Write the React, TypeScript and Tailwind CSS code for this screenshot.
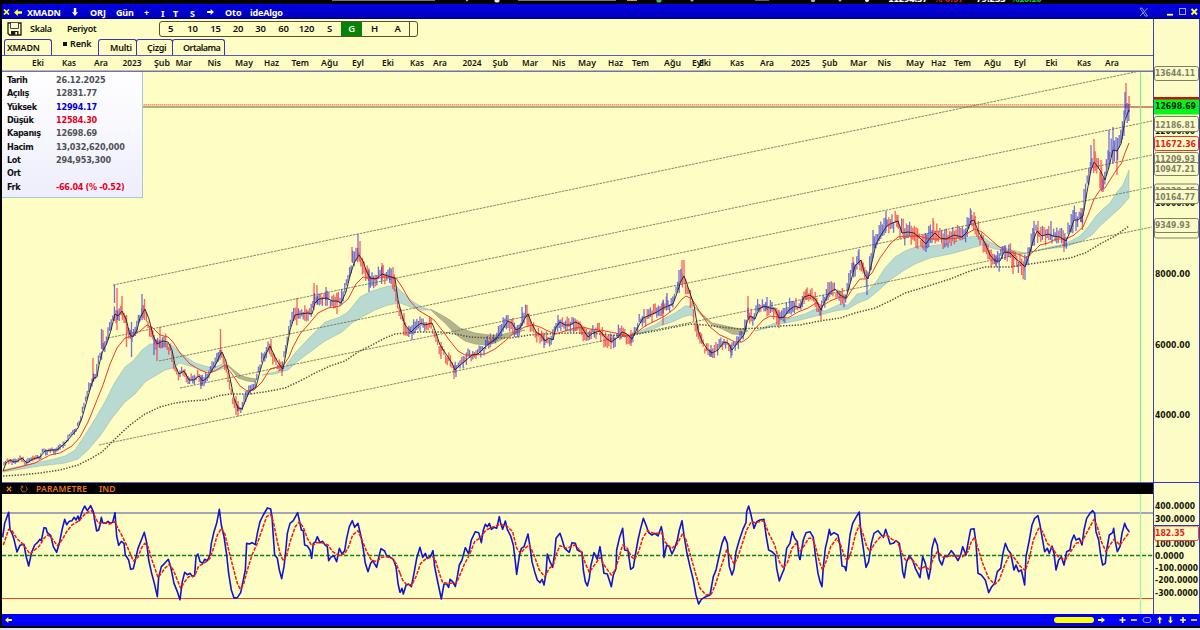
import React from "react";

const CLOSE =
  "3,471 6,463 10,460 14,462 18,461 22,458 27,463 33,459 40,457 45,451 52,450 57,450 63,445 68,440 73,434 78,428 82,418 86,404 91,386 94,378 97,377 99,365 102,353 107,343 111,330 115,314 118,316 122,311 126,319 130,335 133,337 137,330 140,318 145,309 149,319 153,335 157,344 163,341 168,342 172,350 175,365 179,374 184,371 189,380 194,380 199,376 203,381 208,377 212,370 216,364 219,357 222,352 226,361 230,378 234,398 238,408 242,409 245,402 249,392 253,389 256,387 260,371 264,358 270,346 275,357 279,364 283,369 286,353 290,330 295,315 300,314 308,313 312,314 315,303 319,299 327,298 332,301 337,301 341,303 346,292 350,276 354,263 359,255 363,261 366,270 370,278 376,279 382,274 388,276 395,278 398,300 402,315 405,325 411,332 416,327 421,323 425,325 432,323 436,333 440,345 444,351 448,357 452,363 455,370 459,366 465,361 472,355 478,354 484,348 490,343 497,338 502,330 508,321 512,323 516,330 520,328 525,318 528,314 532,324 537,333 541,335 545,341 549,338 553,340 556,327 560,322 565,325 570,325 575,322 580,324 584,331 588,337 593,333 600,331 605,337 611,342 617,338 622,332 627,334 632,339 638,327 643,318 650,315 657,312 663,308 668,306 673,304 677,293 681,281 684,276 687,284 691,296 694,305 698,330 702,341 707,349 712,353 718,350 724,342 728,343 732,350 738,342 744,335 747,322 750,316 755,319 759,309 764,306 770,308 775,309 779,318 784,317 789,310 795,306 800,308 804,297 810,295 816,300 821,310 824,303 829,293 835,289 840,295 846,298 850,284 855,266 861,260 865,275 868,279 872,262 876,244 881,235 886,227 890,224 895,222 898,221 902,233 908,232 914,233 920,238 926,244 930,238 935,233 940,238 946,239 954,235 962,237 967,232 971,221 974,220 978,231 985,243 990,255 995,261 1000,261 1004,252 1010,253 1016,259 1021,263 1025,267 1029,256 1033,241 1037,231 1042,236 1048,234 1053,236 1060,237 1066,241 1070,232 1074,220 1078,220 1083,216 1087,192 1091,170 1094,162 1098,167 1101,172 1105,180 1109,167 1113,150 1117,151 1121,144 1125,120 1129,110";

const FAST_MA =
  "3,471 20,467 35,463 50,455 60,453 72,446 80,437 88,422 95,405 103,385 110,364 117,348 125,338 132,336 140,331 147,325 153,328 160,335 168,337 173,342 180,353 190,364 200,370 208,373 215,371 225,365 232,374 240,386 247,391 254,390 262,382 270,369 277,367 283,366 289,357 293,347 300,334 308,325 318,313 328,308 340,306 348,299 356,284 363,277 372,279 385,277 396,278 402,287 410,301 418,310 428,316 434,320 442,330 450,341 458,351 465,355 475,355 485,354 495,349 505,341 515,332 525,327 533,325 540,327 548,331 555,334 565,331 575,328 583,327 590,329 600,330 610,332 620,334 628,336 636,333 645,326 655,321 665,316 675,308 682,299 686,296 692,299 700,312 710,327 720,335 727,338 735,342 742,342 748,338 755,329 763,320 770,316 778,317 788,318 798,312 808,308 816,303 822,306 830,301 840,297 846,299 853,288 860,279 866,279 872,273 880,258 890,244 898,237 908,236 918,236 930,239 945,239 960,238 968,233 975,229 982,232 990,239 998,246 1008,252 1018,254 1026,258 1034,251 1040,245 1048,243 1056,239 1066,239 1074,235 1083,227 1088,215 1094,199 1100,190 1105,188 1110,180 1117,169 1121,164 1125,153 1129,143";

const SLOW_MA =
  "3,476 20,475 40,473 60,470 78,465 90,459 102,452 115,439 130,425 145,414 160,407 175,403 190,401 205,400 218,396 230,394 250,394 270,391 285,388 300,381 315,373 330,366 345,361 358,352 372,345 385,338 395,334 405,333 420,332 440,332 455,334 470,337 490,338 510,338 530,335 545,334 570,333 590,333 610,335 625,336 650,332 670,328 690,324 705,325 720,327 740,329 760,328 780,326 800,325 820,321 840,318 855,313 875,308 890,301 905,293 925,287 950,279 970,271 985,267 1010,267 1030,264 1050,261 1070,258 1085,253 1100,244 1115,236 1129,226";

const UP_CLOUDS = [
  "3,470 30,464 50,460 65,456 75,450 85,435 95,419 105,402 115,382 125,367 133,361 142,350 150,344 158,344 166,343 173,346 182,354 195,363 205,366 213,368 222,364 228,365 235,372 228,367 215,371 205,371 190,366 180,363 173,368 165,370 155,376 145,382 135,394 125,402 112,418 100,436 88,450 78,459 65,463 40,466 3,472",
  "262,375 275,372 285,367 295,353 310,337 325,322 340,317 348,312 360,297 372,291 385,287 395,285 402,292 412,301 422,307 430,310 420,310 408,306 400,303 388,305 375,310 362,317 352,323 342,332 325,341 310,352 298,361 288,370 275,374",
  "565,331 575,329 584,328 580,330",
  "630,336 640,331 655,325 665,318 675,313 685,306 692,306 694,317 690,315 683,317 672,322 660,326 648,331",
  "755,331 775,323 790,318 805,314 815,309 825,311 840,304 848,305 857,294 867,292 876,282 885,268 895,257 905,251 918,246 930,246 945,244 960,240 973,236 983,237 990,242 1000,247 1012,250 1025,253 1010,252 995,249 983,245 975,247 965,250 950,254 930,258 915,264 903,271 890,280 878,291 868,299 858,303 848,309 835,311 820,315 800,320 780,324 760,330",
  "1030,252 1050,247 1065,244 1080,236 1088,227 1096,216 1103,209 1110,203 1117,192 1123,185 1129,170 1129,198 1120,208 1110,217 1100,226 1092,235 1082,241 1065,247 1045,249",
];

const DOWN_CLOUDS = [
  "228,365 235,371 242,376 250,378 257,379 254,382 247,381 238,378",
  "430,309 440,314 450,320 460,328 475,333 490,335 500,335 512,332 525,330 512,335 505,338 495,343 485,345 475,344 465,341 455,334 445,323 436,315",
  "693,305 700,312 712,323 722,325 735,328 745,329 748,331 740,335 732,334 722,329 712,325 702,316",
];

const TRENDS = [
  [113, 285, 1140, 71],
  [108, 338, 1152, 121],
  [159, 361, 1152, 155],
  [180, 388, 1152, 187],
  [99, 445, 1152, 227],
];

/* Isolated extremes of the session range: x, high, low, colour */
const WICKS: [number, number, number, string][] = [
  [114.5, 285, 303, "b"], [117, 288, 330, "r"], [122, 296, 315, "r"], [126.5, 315, 347, "r"], [131.5, 322, 357, "b"],
  [142, 294, 320, "b"], [144.5, 299, 320, "r"], [157, 340, 361, "r"], [154, 335, 355, "b"], [93, 358, 382, "r"],
  [103, 330, 350, "r"], [101.5, 329, 349, "b"], [160, 327, 348, "r"], [201, 375, 389, "b"], [220.5, 329, 355, "r"],
  [236, 396, 415, "r"], [238, 401, 416, "r"], [297, 298, 318, "r"], [271, 339, 350, "r"], [282, 365, 376, "r"],
  [314, 283, 310, "r"], [317, 285, 305, "r"], [326, 287, 300, "b"], [337, 295, 314, "r"], [352, 247, 262, "r"],
  [358, 234, 256, "b"], [360, 241, 262, "r"], [369, 270, 292, "b"], [382, 263, 280, "r"], [393, 267, 285, "r"],
  [404, 313, 332, "r"], [412, 325, 340, "b"], [441, 342, 359, "r"], [454, 365, 379, "r"], [456, 366, 377, "b"],
  [522, 307, 326, "b"], [527, 305, 320, "r"], [544, 335, 348, "b"], [558, 315, 325, "b"], [611, 338, 349, "r"],
  [631, 330, 346, "r"], [663, 301, 325, "r"], [667, 293, 305, "b"], [679, 270, 286, "b"], [682, 260, 285, "r"],
  [684, 260, 280, "r"], [711, 345, 357, "b"], [731, 345, 358, "b"], [748, 296, 318, "r"], [767, 297, 310, "b"],
  [779, 310, 328, "r"], [806, 289, 300, "r"], [821, 308, 320, "r"], [828, 282, 300, "b"], [853, 257, 272, "r"],
  [859, 249, 265, "b"], [867, 273, 295, "b"], [873, 230, 255, "b"], [886, 211, 231, "b"], [898, 215, 228, "r"],
  [926, 235, 252, "b"], [933, 218, 237, "r"], [971, 210, 225, "b"], [974, 212, 225, "r"], [996, 255, 267, "r"],
  [1005, 245, 260, "b"], [1013, 255, 274, "r"], [1025, 262, 280, "b"], [1034, 221, 238, "b"], [1038, 221, 235, "r"],
  [1051, 221, 236, "b"], [1064, 238, 252, "r"], [1073, 210, 228, "b"], [1081, 208, 222, "r"], [1082.5, 215, 230, "r"],
  [1091, 145, 165, "b"], [1094, 139, 162, "r"], [1101, 160, 190, "r"], [1103, 179, 192, "b"], [1109, 130, 160, "b"],
  [1113, 127, 150, "b"], [1117, 150, 175, "r"], [1125, 92, 118, "b"], [1126, 83, 108, "r"], [1129, 96, 112, "r"],
];

const BARS = (() => {
  const pts = CLOSE.split(" ").map((p) => p.split(",").map(Number));
  const at = (x: number) => {
    if (x >= 1129) return 106;
    for (let i = 1; i < pts.length; i++) {
      if (x <= pts[i][0]) {
        const [x0, y0] = pts[i - 1];
        const [x1, y1] = pts[i];
        return y0 + ((y1 - y0) * (x - x0)) / (x1 - x0);
      }
    }
    return 106;
  };
  let seed = 71;
  const rnd = () => {
    seed = (seed * 16807) % 2147483647;
    return seed / 2147483647;
  };
  let up = "";
  let down = "";
  for (let x = 4; x < 1129; x += 1.6) {
    const amp = 2.8 + (482 - at(x)) * 0.034;
    const mid = at(x + 1.5) + (rnd() - 0.5) * amp * 0.7;
    const hi = mid - amp * (0.2 + rnd() * 0.8);
    const lo = mid + amp * (0.2 + rnd() * 0.8);
    const rising = at(x + 3) - at(x) + (rnd() - 0.5) * 7 < 0;
    const seg = `M${x.toFixed(1)} ${hi.toFixed(1)}V${lo.toFixed(1)}`;
    if (rising) up += seg;
    else down += seg;
  }
  for (const [x, hi, lo, c] of WICKS) {
    const seg = `M${x} ${hi}V${lo}`;
    if (c === "b") up += seg;
    else down += seg;
  }
  return { up, down };
})();

/* Oscillator traces, three consecutive blocks of 1200 units (3 units = 1px) */
const OSC = [
  "8,172 14,130 26,97 30,148 36,160 42,178 51,216 60,196 72,193 78,228 86,258 95,217 104,195 112,188 120,178 124,182 132,143 138,144 142,158 152,166 160,200 170,217 178,190 186,150 194,118 200,134 208,124 216,122 222,112 228,120 234,108 238,122 246,95 254,78 262,92 272,77 280,95 284,120 290,153 296,150 300,135 304,112 308,128 316,130 324,124 330,130 338,127 345,98 350,168 356,196 364,184 372,190 376,225 386,240 392,268 400,266 406,240 414,205 424,180 433,157 440,188 446,240 455,280 463,310 472,350 476,292 484,260 494,250 505,238 512,260 522,310 532,335 540,359 547,305 554,277 562,284 570,280 578,290 584,285 588,230 594,222 600,245 608,250 614,238 622,242 630,225 634,190 642,155 650,130 658,88 664,135 672,170 680,225 686,280 694,330 702,354 712,353 722,338 730,300 736,270 740,190 748,192 756,188 766,194 772,160 780,125 790,105 802,84 812,87 816,110 820,170 824,225 832,235 838,270 845,296 852,260 856,225 862,160 870,130 880,122 893,98 900,130 904,150 910,152 914,195 922,198 930,210 935,235 940,190 946,186 952,170 960,188 968,184 976,196 982,200 986,242 994,230 1002,228 1010,245 1018,205 1026,222 1034,212 1040,175 1048,140 1057,122 1064,142 1074,130 1082,165 1088,195 1096,250 1104,275 1112,250 1118,242 1130,262 1138,225 1143,206 1154,213 1160,228 1168,230 1180,238 1188,260 1194,310 1200,338",
  "0,338 6,325 10,342 18,316 26,312 34,320 42,280 50,235 60,202 68,232 76,220 82,235 92,228 99,212 104,260 112,300 124,357 132,312 140,312 146,322 150,298 158,305 166,320 172,290 178,255 186,240 196,203 206,222 214,180 226,155 236,158 244,188 250,150 256,133 262,140 268,130 274,148 282,142 290,145 298,110 302,130 308,148 316,123 322,148 332,168 340,195 346,245 350,283 358,228 364,205 372,200 384,162 390,200 396,245 404,275 412,300 420,308 426,298 432,315 438,280 442,222 450,245 458,262 464,220 468,175 480,160 486,178 494,205 508,217 516,188 526,190 532,210 546,217 550,270 556,305 562,318 568,295 572,260 582,218 592,238 600,200 606,240 612,280 622,282 634,320 640,285 648,265 650,210 658,175 668,145 674,210 684,212 688,240 692,268 700,262 706,225 714,180 722,145 730,115 738,135 746,158 756,165 764,160 774,168 784,140 788,160 792,232 800,195 808,200 816,222 824,205 832,180 838,150 846,122 852,165 860,215 870,260 880,300 888,345 896,372 904,358 914,352 930,345 940,290 948,270 958,225 966,190 974,170 982,190 988,260 996,285 1002,268 1008,215 1018,180 1030,145 1038,128 1040,95 1046,78 1052,100 1062,145 1070,125 1080,120 1092,118 1098,165 1106,210 1116,215 1126,225 1130,265 1138,303 1146,282 1152,268 1160,205 1170,190 1177,155 1184,175 1192,185 1196,225 1200,240",
  "0,240 4,215 10,180 18,158 30,155 40,172 46,225 54,280 60,305 66,320 70,260 76,205 82,180 88,148 92,165 102,158 114,165 120,195 126,258 134,260 138,272 144,220 150,165 158,130 168,112 178,96 182,150 190,205 198,262 206,245 214,190 222,160 234,152 244,165 250,172 257,148 264,170 270,192 280,190 288,182 298,190 304,235 308,275 313,293 320,245 328,228 338,240 346,265 360,293 368,230 376,250 386,297 392,265 396,205 404,175 412,195 418,240 426,255 434,228 442,230 454,212 464,225 474,242 482,225 488,200 498,225 504,190 512,148 522,146 528,190 534,280 544,285 556,300 566,338 574,322 584,310 592,275 602,265 610,215 616,190 624,210 632,220 636,240 642,270 648,255 656,275 664,270 674,315 678,230 688,180 696,135 704,115 714,107 720,135 726,170 734,215 742,205 748,220 756,198 762,220 768,270 776,240 784,230 792,255 800,215 810,210 814,185 822,165 828,180 838,175 846,195 852,150 860,115 870,100 878,92 884,100 888,155 896,180 902,225 908,255 916,250 920,210 928,165 938,158 941,145 946,185 952,215 960,200 966,160 974,130 980,145 988,155",
];

const SIGNAL = [
  "10,195 26,148 36,152 50,175 66,190 78,205 90,222 104,210 118,198 132,175 142,165 152,170 172,197 186,180 200,155 216,135 238,122 256,100 274,92 284,108 294,128 312,128 330,132 344,125 354,145 370,175 384,205 400,243 414,232 424,205 434,190 444,200 456,240 474,292 484,280 494,265 508,253 520,270 532,300 542,325 552,308 566,290 584,288 596,258 612,250 630,235 642,200 652,165 664,145 674,160 686,210 700,265 712,310 720,327 730,315 742,270 756,225 772,190 786,150 800,110 812,103 820,125 830,175 840,220 850,243 860,225 872,180 886,140 898,125 910,142 922,175 936,198 950,188 966,188 984,195 998,215 1016,226 1034,222 1046,200 1058,165 1074,152 1086,180 1100,215 1114,240 1130,245 1144,232 1160,230 1176,235 1188,250 1200,280",
  "0,280 8,300 20,314 36,314 48,290 62,250 76,238 98,230 106,240 118,280 128,308 142,310 168,310 178,290 192,255 208,225 224,185 242,172 258,150 276,142 300,133 320,138 338,155 350,205 362,220 374,205 388,195 402,225 418,270 434,290 448,265 460,255 468,225 480,197 500,205 524,195 544,215 556,250 568,277 580,260 600,232 614,258 634,285 646,270 656,235 668,195 682,205 694,230 704,238 716,215 728,175 742,152 760,160 786,160 794,185 814,205 830,195 848,160 858,180 874,235 888,285 900,325 918,345 934,342 946,315 960,270 980,210 992,230 1002,252 1012,235 1024,200 1040,150 1054,125 1066,128 1092,122 1104,155 1124,195 1138,245 1150,264 1162,248 1176,205 1188,190 1200,212",
  "0,215 14,195 26,175 38,175 48,205 58,245 68,270 80,240 92,200 110,175 122,195 132,225 142,243 154,215 166,165 178,135 190,165 200,200 210,215 224,190 240,172 260,165 276,178 292,185 304,215 316,240 332,235 346,250 360,268 374,260 388,268 400,235 412,215 430,232 450,228 470,228 488,230 504,215 514,185 524,172 534,205 548,250 566,295 584,313 598,300 614,255 630,222 644,235 660,258 676,272 688,235 700,180 716,145 728,155 742,190 758,205 774,230 796,240 812,215 828,190 846,185 862,155 882,118 892,140 904,185 918,215 930,195 942,178 960,195 974,175 988,157",
];

const MONTHS: [string, number, number][] = [
  ["Eki", 32, 12], ["Kas", 62, 14], ["Ara", 94, 14], ["2023", 122.5, 19], ["Şub", 154, 16], ["Mar", 175.5, 16.5], ["Nis", 207.500, 13.500],
  ["May", 235, 18], ["Haz", 264, 15], ["Tem", 291.500, 17.500], ["Ağu", 321, 17], ["Eyl", 352, 12], ["Eki", 382, 12], ["Kas", 410, 14],
  ["Ara", 433, 14], ["2024", 462.500, 19], ["Şub", 492.500, 15.500], ["Mar", 522, 16], ["Nis", 552, 13.500], ["May", 578, 18], ["Haz", 608, 15],
  ["Tem", 632, 17], ["Ağu", 664, 17], ["Eyl", 692, 12], ["Eki", 699, 12], ["Kas", 730, 14], ["Ara", 760, 14], ["2025", 791, 19],
  ["Şub", 822, 15.500], ["Mar", 850, 17], ["Nis", 877.500, 13.500], ["May", 906, 18], ["Haz", 931, 15], ["Tem", 954, 17], ["Ağu", 984, 17],
  ["Eyl", 1014, 12], ["Eki", 1045.500, 12], ["Kas", 1077, 14], ["Ara", 1105, 14],
];

const QUOTE: [string, string, string][] = [
  ["Tarih", "26.12.2025", "text-[#505058]"],
  ["Açılış", "12831.77", "text-[#505058]"],
  ["Yüksek", "12994.17", "text-[#0000d8]"],
  ["Düşük", "12584.30", "text-[#e4001c]"],
  ["Kapanış", "12698.69", "text-[#505058]"],
  ["Hacim", "13,032,620,000", "text-[#505058]"],
  ["Lot", "294,953,300", "text-[#505058]"],
  ["Ort", "", ""],
  ["Frk", "-66.04 (% -0.52)", "text-[#e4001c] tracking-[-0.320px]"],
];

const NOTO = "font-['Noto_Sans','Open_Sans',sans-serif]";
const TAHOMA = "font-['DejaVu_Sans_Condensed','DejaVu_Sans',sans-serif]";

function LeftArrow() {
  return (
    <svg className="h-[7px] w-[8px] shrink-0" viewBox="0 0 8 7">
      <path d="M0 3.5 3.8 0v2.3H8v2.4H3.8V7z" fill="#ffff40" />
    </svg>
  );
}

function TickerStrip() {
  return (
    <svg className="block h-[4px] w-full shrink-0 bg-black" viewBox="0 0 1200 4">
      <rect x="332" y="0" width="103" height="1" fill="#787878" />
      <rect x="518" y="0" width="98" height="1" fill="#787878" />
      <g fill="#b8b8b8">
        <circle cx="467" cy="0" r="1.200" />
        <circle cx="497" cy="0" r="2.600" fill="#e8e8e8" />
        <rect x="627" y="0" width="10" height="1" fill="#c8a040" />
        <circle cx="659" cy="0" r="2.600" fill="#40c070" />
        <circle cx="692" cy="0" r="1.500" />
        <rect x="755" y="0" width="14" height="1" fill="#606060" />
        <circle cx="813" cy="0" r="2.200" />
        <circle cx="840" cy="0" r="1.500" />
      </g>
      <g fontFamily="DejaVu Sans, sans-serif" fontWeight="700" fontSize="8.5">
        <text x="888" y="2.300" textLength="40" fill="#fff">11294.37</text>
        <text x="934" y="2.300" textLength="30" fill="#d02030">% 0.57</text>
        <text x="976" y="2.300" textLength="30" fill="#fff">79.233</text>
        <text x="1011" y="2.300" textLength="31" fill="#20c040">%10.10</text>
      </g>
      <circle cx="867" cy="0" r="2" fill="#fff" />
    </svg>
  );
}

function TitleBar() {
  const cell = "block shrink-0 whitespace-nowrap";
  return (
    <header
      className={`flex h-[15px] w-full shrink-0 items-center border-b border-[#000070] bg-gradient-to-b from-[#0000e8] to-[#0000b8] pt-[2px] text-[9px] font-bold leading-none text-[#fffff0] ${NOTO}`}
    >
      <svg className="ml-[1px] h-[6px] w-[7px] shrink-0" viewBox="0 0 7 6">
        <path d="M1 .5 6 5.500M6 .5 1 5.500" stroke="#ffff40" strokeWidth="1.700" />
      </svg>
      <span className="w-[4px] shrink-0" />
      <LeftArrow />
      <span className={`${cell} ml-[5px] w-[45px] tracking-[-0.200px]`}>XMADN</span>
      <svg className="h-[8px] w-[6px] shrink-0" viewBox="0 0 6 8">
        <path d="M3 8 0 4.200h1.800V0h2.400v4.200H6z" fill="#fff" />
      </svg>
      <span className={`${cell} ml-[12px] w-[26px]`}>ORJ</span>
      <span className={`${cell} w-[28px] tracking-[-0.150px]`}>Gün</span>
      <span className={`${cell} w-[17px] pt-[1px]`}>+</span>
      <span className={`${cell} w-[12px] pt-[2px]`}>I</span>
      <span className={`${cell} w-[17px] pt-[2px]`}>T</span>
      <span className={`${cell} w-[17px] pt-[2px]`}>S</span>
      <svg className="h-[6px] w-[7px] shrink-0" viewBox="0 0 8 7">
        <path d="M8 3.500 4.200 0v2.300H0v2.400h4.200V7z" fill="#fff" />
      </svg>
      <span className={`${cell} ml-[11px] w-[25px]`}>Oto</span>
      <span className={`${cell} tracking-[-0.200px]`}>ideAlgo</span>
      <svg className="ml-auto h-[12px] w-[64px] shrink-0" viewBox="0 0 64 12">
        <path d="M4 2.200h2.200L11.500 10H9.300zM11.500 2.200 4 10" fill="none" stroke="#8c96dc" strokeWidth="1" />
        <rect x="31" y="7.800" width="6" height="1.800" fill="#ffff60" />
        <rect x="43.500" y="2.500" width="6" height="6" fill="none" stroke="#a8a8d8" />
        <path d="m55.500 3 5.500 5.500m0-5.500L55.500 8.500" stroke="#ffff40" strokeWidth="1.900" />
      </svg>
    </header>
  );
}

function PeriodPicker() {
  const items: [string, string][] = [
    ["5", "w-[21px]"], ["10", "w-[23px]"], ["15", "w-[23px]"], ["20", "w-[22px]"], ["30", "w-[23px]"], ["60", "w-[23px]"],
    ["120", "w-[23px]"], ["S", "w-[23px]"], ["G", "w-[21px] bg-[#088208] text-[#e8ffe0]"], ["H", "w-[25px]"], ["A", "w-[21px]"],
  ];
  return (
    <div className="ml-[61px] mt-[1px] flex h-[16px] w-[259px] items-stretch rounded-[3px] border border-[#55552c] text-[9.500px] font-semibold tracking-[-0.200px]">
      {items.map(([label, cls]) => (
        <span key={label} className={`flex shrink-0 items-center justify-center ${cls}`}>
          {label}
        </span>
      ))}
      <span className="ml-[1px] border-l border-[#55552c]" />
    </div>
  );
}

function Toolbar() {
  const tab = "flex h-[16px] shrink-0 items-center rounded-t-[3px] border border-b-0 border-[#3434b0]";
  return (
    <div className={`flex h-[36px] w-full shrink-0 flex-col text-[9px] font-semibold leading-none text-[#101008] ${NOTO}`}>
      <div className="flex h-[18px] items-center">
        <svg className="ml-[5px] mt-[2px] h-[14px] w-[15px]" viewBox="0 0 15 14">
          <path d="M1 1h13v12H2.500L1 11.500z" fill="none" stroke="#1c1c14" strokeWidth="1.300" />
          <path d="M3.500 1v5.500h8V1" fill="#fdfcd8" stroke="#1c1c14" strokeWidth="0.800" />
          <rect x="4" y="9" width="7.500" height="4" fill="#1c1c14" />
          <rect x="8.300" y="10" width="1.800" height="2.500" fill="#fdfcd8" />
        </svg>
        <span className="ml-[8px] w-[37px] tracking-[-0.300px]">Skala</span>
        <span className="w-[31px] tracking-[-0.300px]">Periyot</span>
        <PeriodPicker />
      </div>
      <div className="flex h-[18px] items-end">
        <span className={`${tab} ml-[2px] w-[48px] pl-[2px] tracking-[-0.250px]`}>XMADN</span>
        <span className="flex h-[18px] w-[46px] shrink-0 items-center gap-[3px] pb-[5px] pl-[11px] tracking-[-0.150px]">
          <i className="h-[4px] w-[4px] bg-[#101008]" />
          Renk
        </span>
        <span className={`${tab} w-[39px] pl-[11px] tracking-[-0.200px]`}>Multi</span>
        <span className={`${tab} -ml-px w-[37px] pl-[10px] tracking-[-0.300px]`}>Çizgi</span>
        <span className={`${tab} -ml-px w-[53px] pl-[10px] tracking-[-0.550px]`}>Ortalama</span>
      </div>
    </div>
  );
}

function MonthAxis() {
  return (
    <svg className="block h-[17px] w-full shrink-0" viewBox="2 55 1151 17">
      <rect x="0" y="54.500" width="1153" height="1.300" fill="#3030b8" />
      <rect x="0" y="70.600" width="1153" height="1.200" fill="#5050a8" />
      <g fontFamily="Noto Sans, sans-serif" fontWeight="600" fontSize="9.500" fill="#14140c">
        {MONTHS.map(([m, x, w], i) => (
          <text key={i} x={x} y="66" textLength={w} lengthAdjust="spacingAndGlyphs">
            {m}
          </text>
        ))}
      </g>
    </svg>
  );
}

function QuoteBox() {
  return (
    <div
      className={`absolute left-0 top-0 flex h-[126px] w-[141px] flex-col border-b border-r border-[#a8c8d8] bg-gradient-to-b from-white to-[#eeeefc] pl-[5px] pt-[2px] text-[9px] font-bold leading-[13.350px] ${TAHOMA}`}
    >
      {QUOTE.map(([label, value, cls]) => (
        <div key={label} className="flex h-[13.350px] whitespace-nowrap tracking-[-0.180px]">
          <span className="w-[49px] shrink-0 tracking-[-0.400px] text-[#101014]">{label}</span>
          <span className={cls}>{value}</span>
        </div>
      ))}
    </div>
  );
}

function PriceChart() {
  return (
    <div className="relative h-[411px] w-full shrink-0">
      <svg className="block h-full w-full" viewBox="2 72 1151 411">
        {UP_CLOUDS.map((p, i) => (
          <polygon key={i} points={p} fill="#b8dad0" stroke="#8cb4a8" strokeWidth="0.500" />
        ))}
        {DOWN_CLOUDS.map((p, i) => (
          <polygon key={i} points={p} fill="#b4b48c" stroke="#8c8c70" strokeWidth="0.500" />
        ))}
        <rect x="2" y="104" width="1129" height="2.500" fill="#fbcf9c" />
        <line x1="2" x2="1131" y1="104.500" y2="104.500" stroke="#ee9a78" strokeDasharray="1 1" />
        <line x1="2" x2="1131" y1="107" y2="107" stroke="#6c7040" />
        <line x1="1131" x2="1153" y1="107" y2="107" stroke="#a02018" />
        {TRENDS.map(([x1, y1, x2, y2]) => (
          <line key={y1} x1={x1} y1={y1} x2={x2} y2={y2} stroke="#76765a" strokeWidth="0.900" strokeDasharray="2.500 1" />
        ))}
        <polyline points={SLOW_MA} fill="none" stroke="#55553c" strokeWidth="1.500" strokeDasharray="1.400 1.500" />
        <path d={BARS.down} stroke="#f42c3c" strokeOpacity="0.720" strokeWidth="1.350" />
        <path d={BARS.up} stroke="#3030dc" strokeOpacity="0.680" strokeWidth="1.300" />
        <polyline points={FAST_MA} fill="none" stroke="#f03c20" strokeWidth="1" />
        <polyline points={CLOSE} fill="none" stroke="#201c20" strokeWidth="0.900" />
        <line x1="1140.500" x2="1140.500" y1="72" y2="483" stroke="#80eca0" strokeWidth="1.200" />
        <line x1="2" x2="1153" y1="482.500" y2="482.500" stroke="#6060b0" />
      </svg>
      <QuoteBox />
    </div>
  );
}

function IndicatorHeader() {
  return (
    <div className={`flex h-[11px] w-full shrink-0 items-center bg-black pt-[1px] text-[8.500px] font-semibold leading-none text-[#e87818] ${NOTO}`}>
      <svg className="ml-[4px] h-[6px] w-[6px]" viewBox="0 0 6 6">
        <path d="m.8.8 4.400 4.400m0-4.400L.8 5.200" stroke="#f08020" strokeWidth="1.300" />
      </svg>
      <svg className="ml-[8px] h-[8px] w-[8px]" viewBox="0 0 8 8">
        <path d="M5.500 1.300A3 3 0 1 1 2.300 1.500M2.700 3.300V1.200H.7" fill="none" stroke="#c87020" strokeWidth="0.900" />
      </svg>
      <span className="ml-[8px] w-[63px] tracking-[0.200px]">PARAMETRE</span>
      <span className="tracking-[0.200px]">IND</span>
    </div>
  );
}

function IndicatorChart() {
  return (
    <svg className="block h-[120px] w-full shrink-0" viewBox="2 494 1151 120">
      <line x1="2" x2="1153" y1="513" y2="513" stroke="#4c4cb0" strokeWidth="1.200" />
      <line x1="2" x2="1153" y1="598.500" y2="598.500" stroke="#e84828" strokeWidth="1.100" />
      <line x1="2" x2="1153" y1="555.600" y2="555.600" stroke="#148014" strokeWidth="1.500" strokeDasharray="4.200 1.800" />
      <line x1="1140.500" x2="1140.500" y1="494" y2="614" stroke="#a0f0b0" strokeWidth="1.300" />
      {OSC.map((p, i) => (
        <g key={i} transform={`translate(${i * 400} 480) scale(0.33333)`} fill="none" strokeLinejoin="round">
          <polyline points={p} stroke="#1414cc" strokeWidth="4.800" />
          <polyline points={SIGNAL[i]} stroke="#f01c10" strokeWidth="4.600" strokeDasharray="11 4" />
        </g>
      ))}
    </svg>
  );
}

function ValueAxis() {
  const box = (y: number, h: number, c: string, fill = "#fcfcc6") => (
    <rect x="1154.500" y={y} width="44" height={h} rx="2" fill={fill} stroke={c} />
  );
  const label = (t: string, y: number, w: number, fill: string) => (
    <text x="1155" y={y} textLength={w} lengthAdjust="spacingAndGlyphs" fill={fill}>
      {t}
    </text>
  );
  return (
    <svg
      className="block h-[595px] w-[47px] shrink-0"
      viewBox="1153 19 47 595"
      fontFamily="DejaVu Sans Condensed, DejaVu Sans, sans-serif"
      fontWeight="700"
      fontSize="9"
    >
      <rect x="1153" y="19" width="47" height="595" fill="#fcfcc6" />
      {label("12000.00", 134, 40, "#14140c")}
      {label("10000.00", 206, 40, "#14140c")}
      {label("8000.00", 277, 35, "#14140c")}
      {label("6000.00", 348, 35, "#14140c")}
      {label("4000.00", 418, 35, "#14140c")}
      {box(66.500, 14, "#808060")}
      {label("13644.11", 76, 40, "#80806c")}
      <rect x="1154" y="97" width="45" height="3" fill="#d01010" />
      <rect x="1154" y="99.500" width="45" height="15" fill="#00f818" />
      {label("12698.69", 109, 41, "#041804")}
      {box(116.500, 15, "#808060")}
      {label("12186.81", 127.500, 40, "#80806c")}
      {box(136.500, 14, "#f03020")}
      {label("11672.36", 146.500, 41, "#e81c14")}
      {box(152.500, 14, "#808060")}
      {box(162.500, 13, "#808060")}
      {label("11209.93", 162, 40, "#80806c")}
      {label("10947.21", 171.500, 40, "#80806c")}
      {box(184, 15, "#808060")}
      {label("10229.45", 194, 40, "#80806c")}
      {box(189.500, 14, "#808060")}
      {label("10164.77", 200, 40, "#80806c")}
      {box(223.500, 14.500, "#808060")}
      {box(218.500, 14, "#808060")}
      {label("9349.93", 228, 35, "#80806c")}
      <line x1="1153" x2="1200" y1="482.500" y2="482.500" stroke="#3434c0" />
      {label("400.0000", 509, 40, "#14140c")}
      {label("300.0000", 522, 40, "#14140c")}
      {label("100.0000", 546.500, 40, "#14140c")}
      {label("0.0000", 559, 29, "#14140c")}
      {label("-100.0000", 571, 43, "#14140c")}
      {label("-200.0000", 583, 43, "#14140c")}
      {label("-300.0000", 596, 43, "#14140c")}
      {box(526, 14.500, "#f04838")}
      <line x1="1154" x2="1199" y1="525.500" y2="525.500" stroke="#3434a0" />
      {label("182.35", 536, 30, "#e81c14")}
      <line x1="1153.300" x2="1153.300" y1="19" y2="614" stroke="#2828b8" strokeWidth="1.200" />
      <line x1="1199.500" x2="1199.500" y1="19" y2="614" stroke="#3c3cb0" />
    </svg>
  );
}

function ScrollBar() {
  return (
    <footer className="flex h-[12px] w-full shrink-0 items-center bg-[#0000f8]">
      <svg className="ml-[3px] h-[6px] w-[7px] shrink-0" viewBox="0 0 8 7">
        <path d="M0 3.500 3.800 0v2.300H8v2.400H3.800V7z" fill="#ffff40" />
      </svg>
      <span className="mb-px ml-auto h-[6px] w-[40px] rounded-full bg-[#ffff00]" />
      <svg className="h-[12px] w-[106px] shrink-0" viewBox="1094 614 106 12">
        <g fill="#ffff40">
          <path d="m1105 620-3.500-3v2h-3.500v2h3.500v2z" />
          <path d="m1159.700 616.500-2.500 3h1.700v4h1.600v-4h1.700z" />
          <path d="m1170.500 623.500-2.500-3h1.700v-4h1.600v4h1.700z" />
        </g>
        <path d="M1119.500 620h6M1122.500 617v6M1131 620h6M1180 620h6M1183 617v6M1191 620h6" stroke="#ffff60" strokeWidth="1.500" />
        <rect x="1143" y="617.500" width="8" height="5" rx="2.500" fill="none" stroke="#9c9ce8" />
      </svg>
    </footer>
  );
}

export default function App() {
  return (
    <div className="flex h-[630px] w-[1200px] flex-col overflow-hidden bg-black">
      <TickerStrip />
      <div className="flex h-[622px] shrink-0 flex-col pl-[2px]">
        <TitleBar />
        <div className="flex h-[595px] shrink-0 bg-[#fdfdc4]">
          <div className="flex w-[1151px] shrink-0 flex-col">
            <Toolbar />
            <MonthAxis />
            <PriceChart />
            <IndicatorHeader />
            <IndicatorChart />
          </div>
          <ValueAxis />
        </div>
        <ScrollBar />
      </div>
      <div className="h-[2px] shrink-0 bg-black" />
      <div className="h-[2px] shrink-0 bg-[#e8e8e8]" />
    </div>
  );
}
